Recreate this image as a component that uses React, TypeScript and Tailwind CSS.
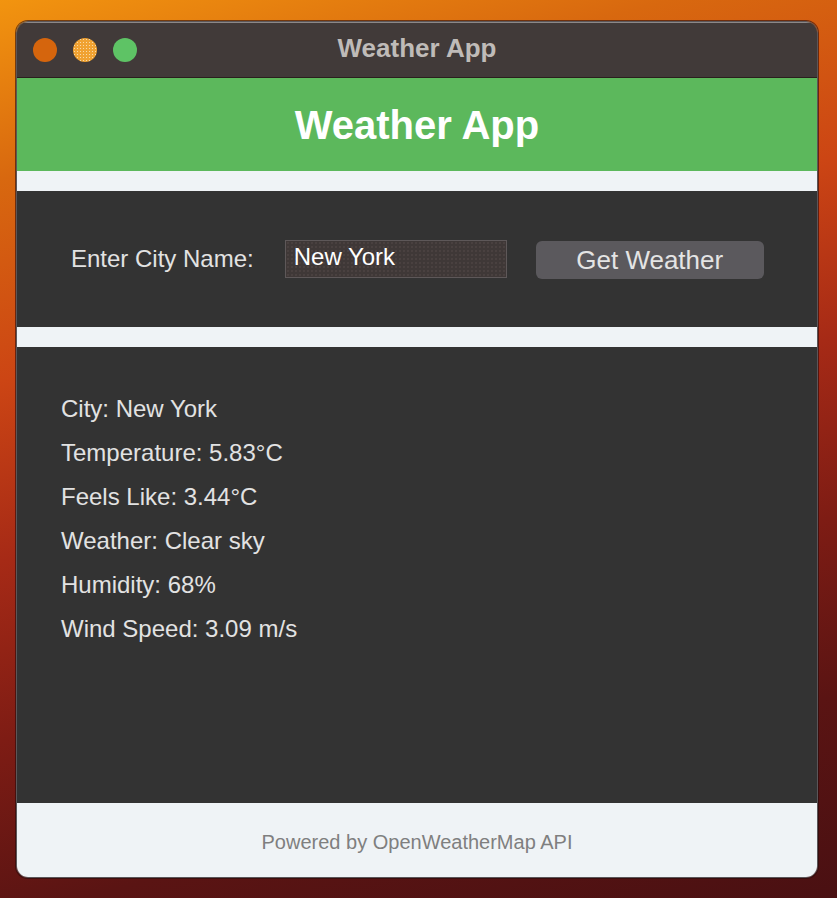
import React from 'react';

interface InfoRow {
  label: string;
  value: string;
}

const App: React.FC = () => {
  // Result shown for the last lookup
  const rows: InfoRow[] = [
    { label: 'City', value: 'New York' },
    { label: 'Temperature', value: '5.83°C' },
    { label: 'Feels Like', value: '3.44°C' },
    { label: 'Weather', value: 'Clear sky' },
    { label: 'Humidity', value: '68%' },
    { label: 'Wind Speed', value: '3.09 m/s' },
  ];

  return (
    <div className="w-full h-[898px] overflow-hidden bg-[linear-gradient(165deg,#f2940f_0%,#d8680f_16%,#cc4514_34%,#a62a16_50%,#7e1c14_66%,#5a1413_82%,#4a1012_100%)] pt-[21px] pl-[16px] font-['Liberation_Sans',Arial,sans-serif]">
      <div className="w-[802px] h-[857px] rounded-[12px] overflow-hidden flex flex-col border border-[#5b5659] shadow-[0_0_0_1px_rgba(40,10,10,0.6)]">
        {/* title bar */}
        <div className="relative h-[56px] shrink-0 bg-[#413a39] border-t border-[#8c8888] border-b border-b-[#2a1f1d] flex items-center justify-center">
          <div className="absolute left-[16px] top-[15px] flex gap-[16px]">
            <span className="w-[24px] h-[24px] rounded-full bg-[#d5650d]" />
            <span className="w-[24px] h-[24px] rounded-full bg-[#f0a232] bg-[radial-gradient(#f8d9a8_0.6px,transparent_0.8px)] bg-[length:3px_3px]" />
            <span className="w-[24px] h-[24px] rounded-full bg-[#5ec365]" />
          </div>
          <span className="text-[26px] font-bold text-[#bfbbb8] leading-none mb-[4px]">Weather App</span>
        </div>

        {/* header */}
        <div className="h-[93px] shrink-0 bg-[#5cb85c] flex items-center justify-center">
          <h1 className="text-[40px] font-bold text-white leading-none">Weather App</h1>
        </div>

        <div className="h-[20px] shrink-0 bg-[#eff3f6]" />

        {/* search */}
        <div className="h-[136px] shrink-0 bg-[#333333] flex items-center pl-[54px]">
          <span className="text-[24px] text-[#e2e2e2] leading-none">Enter City Name:</span>
          <input
            readOnly
            value="New York"
            className="ml-[31px] w-[222px] h-[38px] px-[8px] pb-[5px] bg-[#3f3837] bg-[radial-gradient(#554b49_0.6px,transparent_0.8px)] bg-[length:4px_4px] border border-[#5e5859] text-[24px] text-white outline-none"
          />
          <button className="ml-[29px] mt-[2px] w-[228px] h-[38px] rounded-[6px] bg-[#5b595d] text-[26px] text-[#e4e4e4] leading-none">
            Get Weather
          </button>
        </div>

        <div className="h-[20px] shrink-0 bg-[#eff3f6]" />

        {/* result */}
        <div className="h-[456px] shrink-0 bg-[#333333] pt-[40px] pl-[44px]">
          {rows.map((row) => (
            <div key={row.label} className="text-[24px] leading-[44px] text-[#e2e2e2]">
              {row.label}: {row.value}
            </div>
          ))}
        </div>

        {/* footer */}
        <div className="flex-1 bg-[#eff3f6] flex items-center justify-center pt-[4px]">
          <span className="text-[20px] text-[#7f7f7f]">Powered by OpenWeatherMap API</span>
        </div>
      </div>
    </div>
  );
};

export default App;
